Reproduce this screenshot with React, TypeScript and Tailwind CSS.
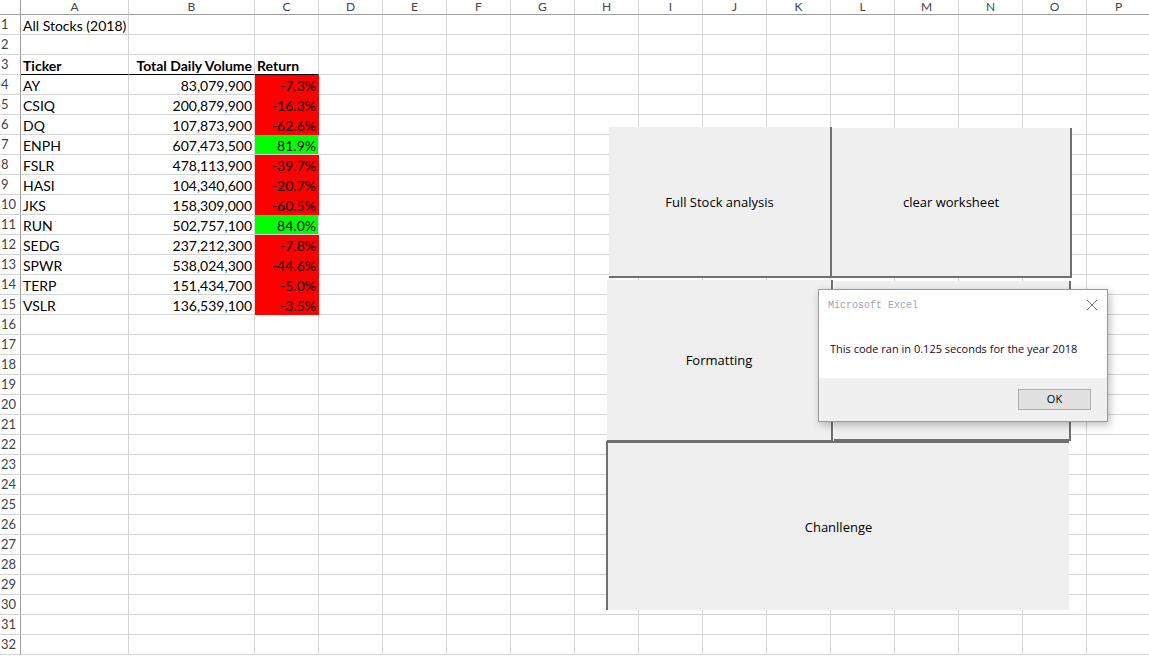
import React from 'react';

const columns = ['A', 'B', 'C', 'D', 'E', 'F', 'G', 'H', 'I', 'J', 'K', 'L', 'M', 'N', 'O', 'P'];

type StockRow = { ticker: string; volume: string; ret: string; up: boolean };

const stocks: StockRow[] = [
  { ticker: 'AY', volume: '83,079,900', ret: '-7.3%', up: false },
  { ticker: 'CSIQ', volume: '200,879,900', ret: '-16.3%', up: false },
  { ticker: 'DQ', volume: '107,873,900', ret: '-62.6%', up: false },
  { ticker: 'ENPH', volume: '607,473,500', ret: '81.9%', up: true },
  { ticker: 'FSLR', volume: '478,113,900', ret: '-39.7%', up: false },
  { ticker: 'HASI', volume: '104,340,600', ret: '-20.7%', up: false },
  { ticker: 'JKS', volume: '158,309,000', ret: '-60.5%', up: false },
  { ticker: 'RUN', volume: '502,757,100', ret: '84.0%', up: true },
  { ticker: 'SEDG', volume: '237,212,300', ret: '-7.8%', up: false },
  { ticker: 'SPWR', volume: '538,024,300', ret: '-44.6%', up: false },
  { ticker: 'TERP', volume: '151,434,700', ret: '-5.0%', up: false },
  { ticker: 'VSLR', volume: '136,539,100', ret: '-3.5%', up: false },
];

const cell = 'h-[20px] pt-[1px] border-r border-b border-[#d4d4d4] flex items-center overflow-visible whitespace-nowrap';

function SheetRow({ n }: { n: number }) {
  const stock = n >= 4 && n <= 15 ? stocks[n - 4] : null;
  const headerLine = n === 3 ? 'border-b-black' : '';
  const cells: React.ReactNode[] = [];

  cells.push(
    <div key="num" className={`${cell} border-r-[#9e9e9e] pl-[1px] text-[13px] text-[#444]`}>
      {n}
    </div>
  );

  columns.forEach((col) => {
    let content: React.ReactNode = null;
    let extra = '';
    if (col === 'A') {
      extra = `pl-[2px] ${headerLine}`;
      if (n === 1) content = 'All Stocks (2018)';
      if (n === 3) content = <span className="font-bold">Ticker</span>;
      if (stock) content = stock.ticker;
    } else if (col === 'B') {
      extra = `justify-end pr-[2px] ${headerLine}`;
      if (n === 3) content = <span className="font-bold">Total Daily Volume</span>;
      if (stock) content = stock.volume;
    } else if (col === 'C') {
      extra = `pl-[2px] ${headerLine}`;
      if (n === 3) content = <span className="font-bold">Return</span>;
      if (stock) {
        content = stock.ret;
        extra = stock.up
          ? 'justify-end pr-[2px] bg-[#00ff00] border-[#00ff00]'
          : 'justify-end pr-[2px] bg-[#ff0000] border-[#ff0000]';
      }
    }
    cells.push(
      <div key={col} className={`${cell} ${extra}`}>
        {content}
      </div>
    );
  });

  return <>{cells}</>;
}

function SheetButton({ label, className }: { label?: string; className: string }) {
  return (
    <div
      className={`absolute flex items-center justify-center pt-[2px] bg-[#efefef] text-[13px] text-black ${className}`}
      style={{ fontFamily: '"Open Sans", sans-serif' }}
    >
      {label}
    </div>
  );
}

export default function App() {
  const rows = Array.from({ length: 32 }, (_, i) => i + 1);

  return (
    <div
      className="relative w-[1149px] h-[659px] overflow-hidden bg-white text-[14px] text-black"
      style={{ fontFamily: 'Lato, "Open Sans", sans-serif' }}
    >
      <div className="grid grid-cols-[21px_108px_126px_64px_repeat(13,64px)]">
        <div className="h-[15px] border-b border-r border-[#9e9e9e]" />
        {columns.map((c) => (
          <div
            key={c}
            className="h-[15px] border-b border-r border-b-[#9e9e9e] border-r-[#d4d4d4] flex justify-center items-start text-[12px] leading-[12px] text-[#444]"
          >
            <span className="mt-[1px]">{c}</span>
          </div>
        ))}
        {rows.map((n) => (
          <SheetRow key={n} n={n} />
        ))}
      </div>

      {/* macro buttons */}
      <SheetButton
        label="Full Stock analysis"
        className="left-[609px] top-[127px] w-[223px] h-[151px] border-r-2 border-b-2 border-[#6f6f6f]"
      />
      <SheetButton
        label="clear worksheet"
        className="left-[832px] top-[128px] w-[240px] h-[150px] border-r-2 border-b-2 border-[#6f6f6f]"
      />
      <SheetButton
        label="Formatting"
        className="left-[607px] top-[280px] w-[226px] h-[162px] border-r-2 border-b-2 border-[#6f6f6f]"
      />
      <SheetButton className="left-[834px] top-[281px] w-[237px] h-[160px] border-r-2 border-b-2 border-[#6f6f6f]" />
      <SheetButton
        label="Chanllenge"
        className="left-[606px] top-[441px] w-[463px] h-[169px] border-l-2 border-t-2 border-[#6f6f6f]"
      />

      {/* message box */}
      <div
        className="absolute left-[818px] top-[289px] w-[290px] h-[133px] bg-white border border-[#9a9a9a] shadow-[2px_3px_8px_rgba(0,0,0,0.25)] flex flex-col"
        style={{ fontFamily: '"Open Sans", sans-serif' }}
      >
        <div className="h-[30px] flex items-center justify-between pl-[9px] pr-[9px]">
          <span
            className="text-[10px] text-[#9ca6b6]"
            style={{ fontFamily: '"Liberation Mono", monospace' }}
          >
            Microsoft Excel
          </span>
          <svg width="12" height="12" viewBox="0 0 12 12">
            <path d="M1 1 L11 11 M11 1 L1 11" stroke="#777" strokeWidth="1" fill="none" />
          </svg>
        </div>
        <div className="flex-1 flex items-center pl-[11px] text-[11px] text-[#1a0a2a]">
          This code ran in 0.125 seconds for the year 2018
        </div>
        <div className="h-[43px] bg-[#f0f0f0] flex items-center justify-end pr-[16px]">
          <div className="w-[73px] h-[21px] border border-[#adadad] bg-[#e1e1e1] flex items-center justify-center text-[11px] text-black">
            OK
          </div>
        </div>
      </div>
    </div>
  );
}
